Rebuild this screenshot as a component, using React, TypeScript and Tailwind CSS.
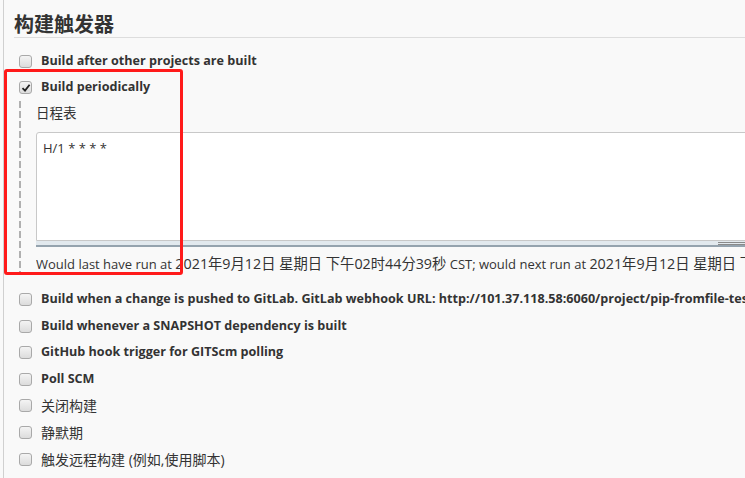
import { Fragment } from "react"

const font = { fontFamily: '"Open Sans", "Noto Sans CJK SC", sans-serif' }

function Checkbox({ checked = false }: { checked?: boolean }) {
  return (
    <span className="relative flex h-[13px] w-[13px] shrink-0 items-center justify-center rounded-[3px] border border-[#a9a9a9] bg-gradient-to-b from-[#f4f4f4] to-[#dcdcdc]">
      {checked && (
        <svg width="10" height="10" viewBox="0 0 10 10">
          <path d="M1.5 5.2 L4 7.6 L8.6 1.8" fill="none" stroke="#222" strokeWidth="1.8" />
        </svg>
      )}
    </span>
  )
}

function Row({ label, checked, bold = true }: { label: string; checked?: boolean; bold?: boolean }) {
  return (
    <div className="flex h-[26.6px] items-center pl-[15px]">
      <Checkbox checked={checked} />
      <span
        className={`ml-[9px] whitespace-nowrap text-[#333] ${bold ? "text-[12.6px] font-bold" : "text-[14px] font-normal"}`}
      >
        {label}
      </span>
    </div>
  )
}

const lowerRows = [
  { label: "Build when a change is pushed to GitLab. GitLab webhook URL: http://101.37.118.58:6060/project/pip-fromfile-test", bold: true },
  { label: "Build whenever a SNAPSHOT dependency is built", bold: true },
  { label: "GitHub hook trigger for GITScm polling", bold: true },
  { label: "Poll SCM", bold: true },
  { label: "关闭构建", bold: false },
  { label: "静默期", bold: false },
  { label: "触发远程构建 (例如,使用脚本)", bold: false },
]

export default function App() {
  return (
    <div className="relative h-[478px] w-[745px] overflow-hidden bg-[#f9f9f9]" style={font}>
      <div className="ml-[3px] h-full overflow-hidden border-l border-[#d0d0d0]">
        {/* section header */}
        <div className="ml-[10px] border-b border-[#dddddd] pt-[13px]">
          <h2 className="text-[20px] font-bold leading-[24px] text-[#333]">构建触发器</h2>
        </div>

        <div className="mt-[10px]">
          <Row label="Build after other projects are built" />
          <Row label="Build periodically" checked />

          {/* nested block for schedule */}
          <div className="flex h-[185px]">
            <div className="ml-[15px] h-[172px] w-[2px] bg-[repeating-linear-gradient(to_bottom,#b0b0b0_0px,#b0b0b0_7px,transparent_7px,transparent_10px)]" />
            <div className="ml-[15px] flex-1 overflow-hidden">
              <div className="mt-[3px] text-[13.5px] leading-[18px] text-[#333]">日程表</div>
              <div className="mt-[10px] -mr-[40px]">
                <div className="h-[109px] rounded-tl-[3px] border border-[#c8c8c8] bg-white px-[6px] pt-[6px] text-[13px] leading-[18px] text-[#333]">
                  H/1 * * * *
                </div>
                <div className="relative h-[6px] border-b-2 border-[#95a3ae] bg-[#e2e9ee]">
                  <div className="absolute top-[1px] left-[682px] h-[1px] w-[60px] bg-[#8a8a8a]" />
                  <div className="absolute top-[3px] left-[682px] h-[1px] w-[60px] bg-[#8a8a8a]" />
                </div>
              </div>
              <div className="mt-[8px] whitespace-nowrap text-[13px] leading-[18px] text-[#333]">
                Would last have run at <span className="text-[14.3px]">2021年9月12日 星期日 下午02时44分39秒</span> CST; would next run at <span className="text-[14.3px]">2021年9月12日 星期日 下午03时44分39秒</span> CST.
              </div>
            </div>
          </div>

          {lowerRows.map((r) => (
            <Fragment key={r.label}>
              <Row label={r.label} bold={r.bold} />
            </Fragment>
          ))}
        </div>
      </div>

      {/* red annotation box */}
      <div className="pointer-events-none absolute top-[69px] left-[4px] h-[206px] w-[179px] rounded-[3px] border-[3px] border-[#ff1a1a]" />
    </div>
  )
}
